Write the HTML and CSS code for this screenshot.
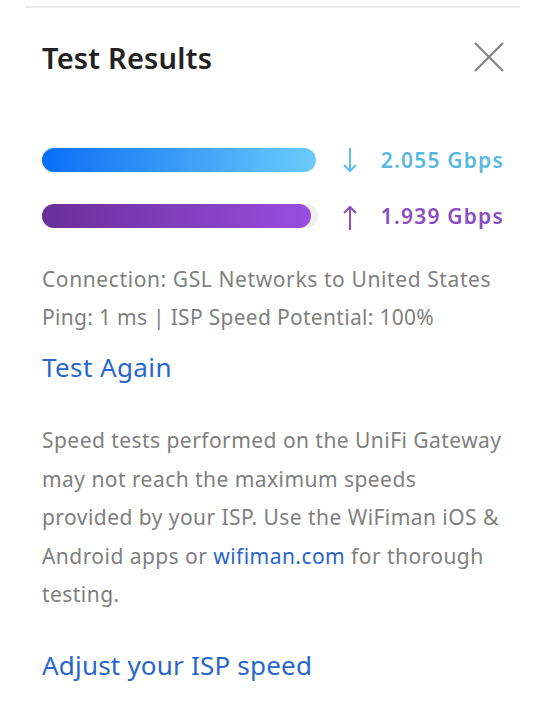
FILE: index.html
```html
<!DOCTYPE html>
<html lang="en">

<head>
    <meta charset="UTF-8" />
    <title>Test Results</title>
    <link rel="stylesheet" href="styles.css">
</head>

<body>
    <div class="divider"></div>

    <div class="panel">
        <div class="header">
            <h2>Test Results</h2>
            <button class="close" aria-label="Close">
                <svg width="30" height="30" viewBox="0 0 30 30">
                    <path d="M1 1 L29 29 M29 1 L1 29" stroke="#858585" stroke-width="2.2" fill="none" />
                </svg>
            </button>
        </div>

        <div class="speeds">
            <div class="speed-row down">
                <div class="track">
                    <div class="fill" style="width: 100%;"></div>
                </div>
                <span class="arrow">
                    <svg width="14" height="26" viewBox="0 0 14 26">
                        <path d="M7 1 V24 M1 18 L7 24 L13 18" stroke="currentColor" stroke-width="2" fill="none" />
                    </svg>
                </span>
                <span class="value">2.055 Gbps</span>
            </div>
            <div class="speed-row up">
                <div class="track">
                    <div class="fill" style="width: 97.5%;"></div>
                </div>
                <span class="arrow">
                    <svg width="14" height="26" viewBox="0 0 14 26">
                        <path d="M7 25 V2 M1 8 L7 2 L13 8" stroke="currentColor" stroke-width="2" fill="none" />
                    </svg>
                </span>
                <span class="value">1.939 Gbps</span>
            </div>
        </div>

        <div class="info">
            <p>Connection: GSL Networks to United States</p>
            <p class="ping">Ping: 1 ms | ISP Speed Potential: 100%</p>
        </div>

        <a class="link big" href="#">Test Again</a>

        <p class="note">
            Speed tests performed on the UniFi Gateway<br>
            may not reach the maximum speeds<br>
            provided by your ISP. Use the WiFiman iOS &amp;<br>
            Android apps or <a class="link" href="#">wifiman.com</a> for thorough<br>
            testing.
        </p>

        <a class="link big adjust" href="#">Adjust your ISP speed</a>
    </div>
</body>

</html>
```

FILE: styles.css
```css
* {
    box-sizing: border-box;
    margin: 0;
    padding: 0;
}

body {
    font-family: 'Noto Sans', 'Open Sans', sans-serif;
    background-color: #ffffff;
    color: #808080;
}

.divider {
    height: 2px;
    margin: 6px 32px 0 25px;
    background-color: #ebebeb;
}

.panel {
    padding: 0 49px 0 42px;
}

.header {
    display: flex;
    justify-content: space-between;
    align-items: center;
    margin-top: 34px;
    height: 30px;
}

h2 {
    font-size: 29px;
    font-weight: 600;
    color: #222222;
    letter-spacing: 0.2px;
}

.close {
    border: none;
    background: none;
    width: 30px;
    height: 30px;
    margin-right: -1px;
    cursor: pointer;
}

.speeds {
    margin-top: 76px;
    display: flex;
    flex-direction: column;
    gap: 32px;
}

.speed-row {
    display: flex;
    align-items: center;
    height: 24px;
}

.track {
    width: 276px;
    height: 24px;
    border-radius: 12px;
    background-color: #efefef;
}

.fill {
    height: 100%;
    border-radius: 12px;
}

.down .track {
    width: 274px;
    background-color: transparent;
}

.down .fill {
    background: linear-gradient(90deg, #0a6ef6, #6ccbfa);
}

.up .fill {
    background: linear-gradient(90deg, #6a2f98, #9a4ddf);
}

.arrow {
    display: flex;
    width: 14px;
}

.down .arrow {
    color: #58c0e8;
    margin-left: 27px;
}

.up .arrow {
    color: #8e4bc2;
    margin-left: 25px;
    margin-top: 4px;
}

.value {
    margin-left: auto;
    font-size: 21px;
    font-weight: 600;
    letter-spacing: 1.2px;
    margin-right: -1px;
}

.down .value {
    color: #5ab8df;
}

.up .value {
    color: #8b4dc0;
}

.info {
    margin-top: 32px;
    font-size: 21px;
    letter-spacing: 0.6px;
    line-height: 38px;
}

.ping {
    letter-spacing: 0.3px;
}

.link {
    color: #2766cc;
    text-decoration: none;
}

.big {
    display: block;
    font-size: 26px;
    letter-spacing: 0.4px;
    line-height: 40px;
    margin-top: 11px;
}

.note {
    margin-top: 34px;
    margin-right: -30px;
    font-size: 21px;
    letter-spacing: 0.45px;
    line-height: 38.5px;
    white-space: nowrap;
}

.note + .big {
    margin-top: 31px;
}

.adjust {
    letter-spacing: 0.2px;
}
```
